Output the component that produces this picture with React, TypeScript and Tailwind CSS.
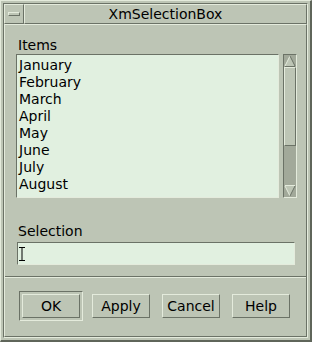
import { Fragment } from 'react'

// only the visible rows; Motif doesn't draw partial items
const months = ['January', 'February', 'March', 'April', 'May', 'June', 'July', 'August']

const raised =
  'border border-t-[#e4ebdc] border-l-[#e4ebdc] border-b-[#6b7266] border-r-[#6b7266]'
const sunken =
  'border border-t-[#6b7266] border-l-[#6b7266] border-b-[#e4ebdc] border-r-[#e4ebdc]'

function Arrow({ up }: { up?: boolean }) {
  return (
    <svg width="12" height="12" viewBox="0 0 12 12" className="block">
      {up ? (
        <Fragment>
          <polygon points="6,1 1,11 11,11" fill="#bdc5b5" />
          <line x1="6" y1="1" x2="1" y2="11" stroke="#e4ebdc" strokeWidth="1" />
          <line x1="6" y1="1" x2="11" y2="11" stroke="#6b7266" strokeWidth="1" />
          <line x1="1" y1="11.5" x2="11" y2="11.5" stroke="#6b7266" strokeWidth="1" />
        </Fragment>
      ) : (
        <Fragment>
          <polygon points="1,1 11,1 6,11" fill="#bdc5b5" />
          <line x1="1" y1="0.5" x2="11" y2="0.5" stroke="#e4ebdc" strokeWidth="1" />
          <line x1="1" y1="1" x2="6" y2="11" stroke="#e4ebdc" strokeWidth="1" />
          <line x1="11" y1="1" x2="6" y2="11" stroke="#6b7266" strokeWidth="1" />
        </Fragment>
      )}
    </svg>
  )
}

function PushButton({ label }: { label: string }) {
  return (
    <div
      className={`${raised} flex h-[24px] w-[58px] items-center justify-center leading-[22px]`}
    >
      {label}
    </div>
  )
}

export default function App() {
  return (
    <div className="h-[342px] w-[312px] bg-[#bdc5b5] font-['DejaVu_Sans',sans-serif] text-[14px] leading-[17px] text-black">
      <div className="flex h-full w-full flex-col border-t border-l border-r-2 border-b-2 border-t-[#e4ebdc] border-l-[#e4ebdc] border-r-[#5f655a] border-b-[#5f655a] p-[2px]">
        <div className="flex flex-1 flex-col border border-t-[#6b7266] border-l-[#6b7266] border-b-[#e4ebdc] border-r-[#e4ebdc]">
          {/* title bar */}
          <div className="flex h-[20px]">
            <div className={`${raised} flex h-[20px] w-[20px] items-center justify-center`}>
              <div className={`${raised} h-[4px] w-[12px]`} />
            </div>
            <div className={`${raised} flex h-[20px] flex-1 items-center justify-center leading-[18px]`}>
              XmSelectionBox
            </div>
          </div>

          {/* work area */}
          <div className={`${raised} flex flex-1 flex-col pt-[12px] pl-[11px] pr-[9px]`}>
            <div className="pl-[2px]">Items</div>
            <div className="flex h-[144px] gap-[4px]">
              <div className={`${sunken} flex-1 overflow-hidden bg-[#e1f0e0] pt-[2px] pl-[2px]`}>
                {months.map((m) => (
                  <div key={m}>{m}</div>
                ))}
              </div>
              <div className={`${sunken} flex w-[14px] flex-col bg-[#a2a99a]`}>
                <Arrow up />
                <div className={`${raised} h-[79px] bg-[#bdc5b5]`} />
                <div className="flex-1" />
                <Arrow />
              </div>
            </div>

            <div className="mt-[25px] pl-[2px]">Selection</div>
            <div className={`${sunken} mt-[2px] ml-[1px] flex h-[23px] w-[278px] items-center bg-[#e1f0e0] pl-[1px]`}>
              <svg width="6" height="14" viewBox="0 0 6 14" className="block">
                <line x1="0" y1="0.5" x2="6" y2="0.5" stroke="#000" />
                <line x1="3" y1="0" x2="3" y2="14" stroke="#000" />
                <line x1="0" y1="13.5" x2="6" y2="13.5" stroke="#000" />
              </svg>
            </div>

            <div className="-mr-[9px] -ml-[11px] mt-[11px] border-t border-b border-t-[#6b7266] border-b-[#e4ebdc]" />

            <div className="mt-[13px] flex items-center">
              <div className={`${sunken} ml-[3px] p-[2px]`}>
                <PushButton label="OK" />
              </div>
              <div className="ml-[9px]">
                <PushButton label="Apply" />
              </div>
              <div className="ml-[12px]">
                <PushButton label="Cancel" />
              </div>
              <div className="ml-[12px]">
                <PushButton label="Help" />
              </div>
            </div>
          </div>
        </div>
      </div>
    </div>
  )
}
